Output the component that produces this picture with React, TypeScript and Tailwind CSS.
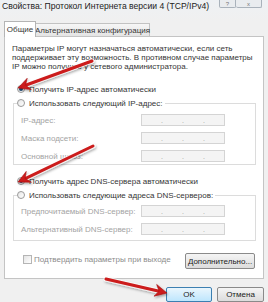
import React from "react";

function Radio({ checked }: { checked?: boolean }) {
  return (
    <span className="relative flex h-[8px] w-[8px] shrink-0 items-center justify-center rounded-full border border-[#9a9a9a] bg-gradient-to-br from-[#e6e6e6] to-white">
      {checked && <span className="h-[4px] w-[4px] rounded-full bg-[#1f4f7a]" />}
    </span>
  );
}

function IpField() {
  return (
    <div className="flex h-[12px] w-[84px] items-center border border-[#d4d4d4] bg-[#f4f4f4] text-[7px] leading-none text-[#9c9c9c]">
      <span className="flex-1" />
      <span>.</span>
      <span className="flex-1" />
      <span>.</span>
      <span className="flex-1" />
      <span>.</span>
      <span className="flex-1" />
    </div>
  );
}

function FieldRow({ label }: { label: string }) {
  return (
    <div className="flex h-[12px] items-center pl-[7px]">
      <span className="w-[120px] whitespace-nowrap text-[#a3a3a3]">{label}</span>
      <IpField />
    </div>
  );
}

function Arrow({ x1, y1, x2, y2 }: { x1: number; y1: number; x2: number; y2: number }) {
  const len = Math.hypot(x2 - x1, y2 - y1);
  const dx = (x2 - x1) / len;
  const dy = (y2 - y1) / len;
  const bx = x2 - dx * 12;
  const by = y2 - dy * 12;
  const nx = -dy * 6;
  const ny = dx * 6;
  const mx = x2 - dx * 8;
  const my = y2 - dy * 8;
  const head = `${x2},${y2} ${bx + nx},${by + ny} ${mx},${my} ${bx - nx},${by - ny}`;
  return (
    <g filter="url(#shadow)">
      <line x1={x1} y1={y1} x2={mx} y2={my} stroke="#fff" strokeWidth="5" strokeLinecap="round" opacity="0.7" />
      <line x1={x1} y1={y1} x2={mx} y2={my} stroke="#cc1a1a" strokeWidth="3" strokeLinecap="round" />
      <polygon points={head} fill="#cc1a1a" stroke="#a51010" strokeWidth="0.6" strokeLinejoin="round" />
    </g>
  );
}

export default function App() {
  return (
    <div className="relative h-[302px] w-[268px] overflow-hidden bg-[#f0f0f0] font-['Liberation_Sans',Arial,sans-serif] text-[8px] leading-[9px] text-[#353535]">
      {/* title bar */}
      <div className="flex h-[21px] items-start justify-between bg-gradient-to-b from-[#eef1f4] to-[#f0f0f0]">
        <span className="whitespace-nowrap pl-[2px] pt-[2px] text-[8.6px] text-[#222]">Свойства: Протокол Интернета версии 4 (TCP/IPv4)</span>
        <div className="mr-[6px] flex">
          <div className="flex h-[8px] w-[17px] items-end justify-center rounded-b-[2px] border border-t-0 border-[#a9b2bb] bg-[#e9ecef] text-[6px] leading-[6px] text-[#777]">?</div>
          <div className="flex h-[8px] w-[26px] items-end justify-center rounded-b-[2px] border border-l-0 border-t-0 border-[#a9b2bb] bg-[#e9ecef] text-[6px] leading-[6px] text-[#777]">x</div>
        </div>
      </div>

      {/* tabs */}
      <div className="flex h-[15px] items-end pl-[4px]">
        <div className="relative z-10 -mb-px flex h-[16px] w-[32px] items-center justify-center border border-b-0 border-[#b4b4b4] bg-white">
          Общие
        </div>
        <div className="flex h-[13px] w-[114px] items-center justify-center whitespace-nowrap border border-b-0 border-l-0 border-[#c2c2c2] bg-gradient-to-b from-[#f6f6f6] to-[#e4e4e4]">
          Альтернативная конфигурация
        </div>
      </div>

      {/* panel */}
      <div className="mx-[4px] h-[243px] border border-[#c4c4c4] bg-white">
        <p className="mt-[7px] whitespace-nowrap pl-[7px]">
          Параметры IP могут назначаться автоматически, если сеть
          <br />
          поддерживает эту возможность. В противном случае параметры
          <br />
          IP можно получить у сетевого администратора.
        </p>

        <div className="mt-[12px] flex h-[12px] items-center gap-[4px] pl-[12px]">
          <Radio checked />
          <span>Получить IP-адрес автоматически</span>
        </div>

        <div className="ml-[8px] mr-[7px] mt-[8px] border border-[#dcdcdc] pb-[2px]">
          <div className="relative -mt-[7px] ml-[3px] flex h-[12px] w-fit items-center gap-[4px] bg-white pr-[2px]">
            <Radio />
            <span>Использовать следующий IP-адрес:</span>
          </div>
          <div className="mt-[5px] flex flex-col gap-[6px]">
            <FieldRow label="IP-адрес:" />
            <FieldRow label="Маска подсети:" />
            <FieldRow label="Основной шлюз:" />
          </div>
        </div>

        <div className="mt-[10px] flex h-[12px] items-center gap-[4px] pl-[12px]">
          <Radio checked />
          <span>Получить адрес DNS-сервера автоматически</span>
        </div>

        <div className="ml-[8px] mr-[7px] mt-[8px] border border-[#dcdcdc] pb-[5px]">
          <div className="relative -mt-[7px] ml-[3px] flex h-[12px] w-fit items-center gap-[4px] bg-white pr-[2px]">
            <Radio />
            <span>Использовать следующие адреса DNS-серверов:</span>
          </div>
          <div className="mt-[4px] flex flex-col gap-[6px]">
            <FieldRow label="Предпочитаемый DNS-сервер:" />
            <FieldRow label="Альтернативный DNS-сервер:" />
          </div>
        </div>

        <div className="mt-[12px] flex items-start justify-between pl-[18px] pr-[8px]">
          <div className="mt-[1px] flex h-[10px] items-center gap-[2px] text-[#8c8c8c]">
            <span className="h-[9px] w-[9px] border border-[#b5b5b5] bg-gradient-to-br from-[#e4e4e4] to-white" />
            <span>Подтвердить параметры при выходе</span>
          </div>
          <div className="flex h-[16px] w-[70px] items-center justify-center rounded-[2px] border border-[#8a8a8a] bg-gradient-to-b from-[#f5f5f5] to-[#dcdcdc] text-[#222]">
            Дополнительно...
          </div>
        </div>
      </div>

      {/* dialog buttons */}
      <div className="mt-[8px] flex justify-end gap-[5px] pr-[4px]">
        <div className="flex h-[15px] w-[46px] items-center justify-center rounded-[2px] border border-[#3c7fb1] bg-gradient-to-b from-[#eaf6fd] to-[#bee6fd] text-[#222]">
          OK
        </div>
        <div className="flex h-[15px] w-[47px] items-center justify-center rounded-[2px] border border-[#8a8a8a] bg-gradient-to-b from-[#f5f5f5] to-[#dcdcdc] text-[#222]">
          Отмена
        </div>
      </div>

      {/* red annotation arrows */}
      <svg className="pointer-events-none absolute left-0 top-0" width="268" height="302" viewBox="0 0 268 302">
        <defs>
          <filter id="shadow" x="-20%" y="-20%" width="140%" height="140%">
            <feDropShadow dx="1" dy="1.5" stdDeviation="1" floodColor="#000" floodOpacity="0.35" />
          </filter>
        </defs>
        <Arrow x1={92} y1={61} x2={18} y2={88} />
        <Arrow x1={93} y1={146} x2={18} y2={182} />
        <Arrow x1={106} y1={279} x2={167} y2={293} />
      </svg>
    </div>
  );
}
